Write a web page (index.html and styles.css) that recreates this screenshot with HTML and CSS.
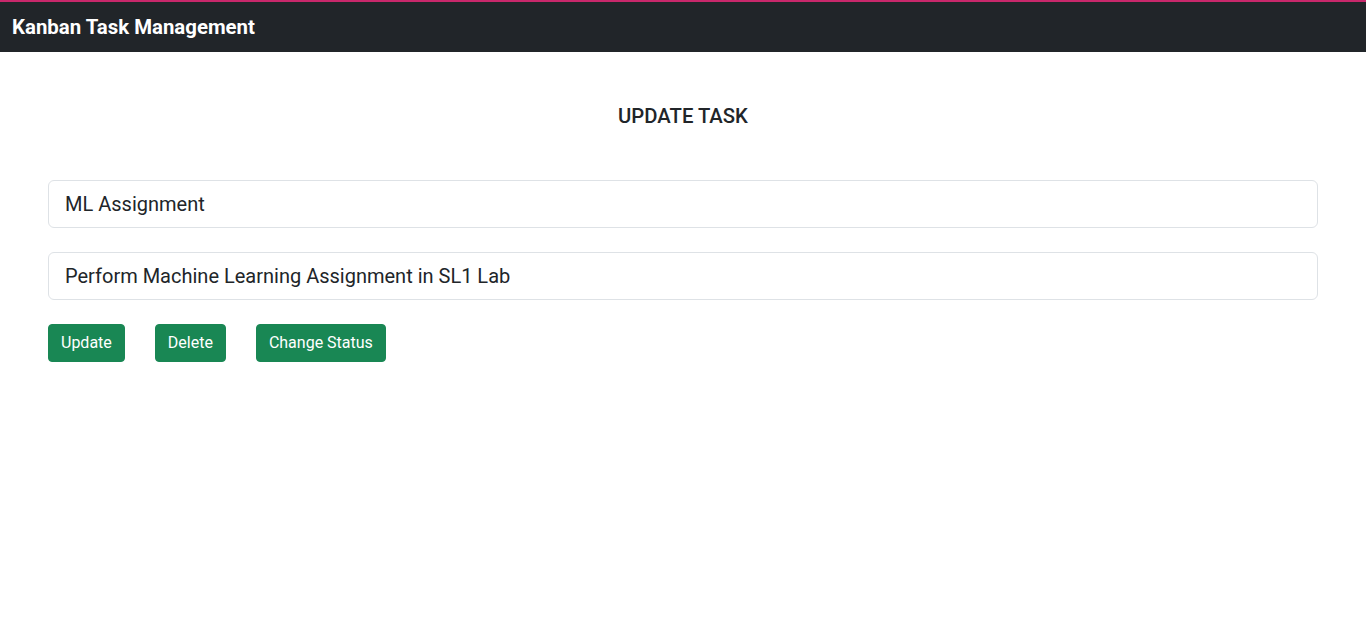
FILE: index.html
```html
<!DOCTYPE html>
<html lang="en">
<head>
<meta charset="utf-8">
<title>Kanban Task Management</title>
<link rel="stylesheet" href="styles.css">
</head>
<body>
<nav class="navbar">
  <span class="brand">Kanban Task Management</span>
</nav>
<main class="page">
  <h2 class="title">UPDATE TASK</h2>
  <form class="form">
    <input class="field" type="text" value="ML Assignment">
    <input class="field" type="text" value="Perform Machine Learning Assignment in SL1 Lab">
    <div class="actions">
      <button type="button" class="btn">Update</button>
      <button type="button" class="btn">Delete</button>
      <button type="button" class="btn">Change Status</button>
    </div>
  </form>
</main>
</body>
</html>
```
FILE: styles.css
```css
* { box-sizing: border-box; }
html, body { margin: 0; padding: 0; }
body {
  font-family: Roboto, "Liberation Sans", sans-serif;
  color: #212529;
  background: #fff;
}
.navbar {
  height: 52px;
  background: #212529;
  border-top: 2px solid #c8286b;
  display: flex;
  align-items: center;
  padding: 0 12px;
}
.brand {
  color: #fff;
  font-size: 20.4px;
  font-weight: 700;
  line-height: 1;
  margin-top: 1px;
}
.page {
  padding: 0 48px;
}
.title {
  margin: 0;
  padding-top: 52px;
  height: 128px;
  text-align: center;
  font-size: 20.3px;
  font-weight: 500;
  line-height: 24px;
}
.form {
  display: flex;
  flex-direction: column;
  gap: 24px;
}
.field {
  display: block;
  width: 100%;
  height: 48px;
  padding: 8px 16px;
  font-family: inherit;
  font-size: 20px;
  color: #212529;
  background: #fff;
  border: 1px solid #dee2e6;
  border-radius: 6px;
  outline: none;
}
.actions {
  display: flex;
  gap: 30px;
}
.btn {
  height: 38px;
  padding: 0 12px 1px;
  font-family: inherit;
  font-size: 16px;
  color: #fff;
  background: #198754;
  border: 1px solid #198754;
  border-radius: 4px;
  cursor: pointer;
}
```
